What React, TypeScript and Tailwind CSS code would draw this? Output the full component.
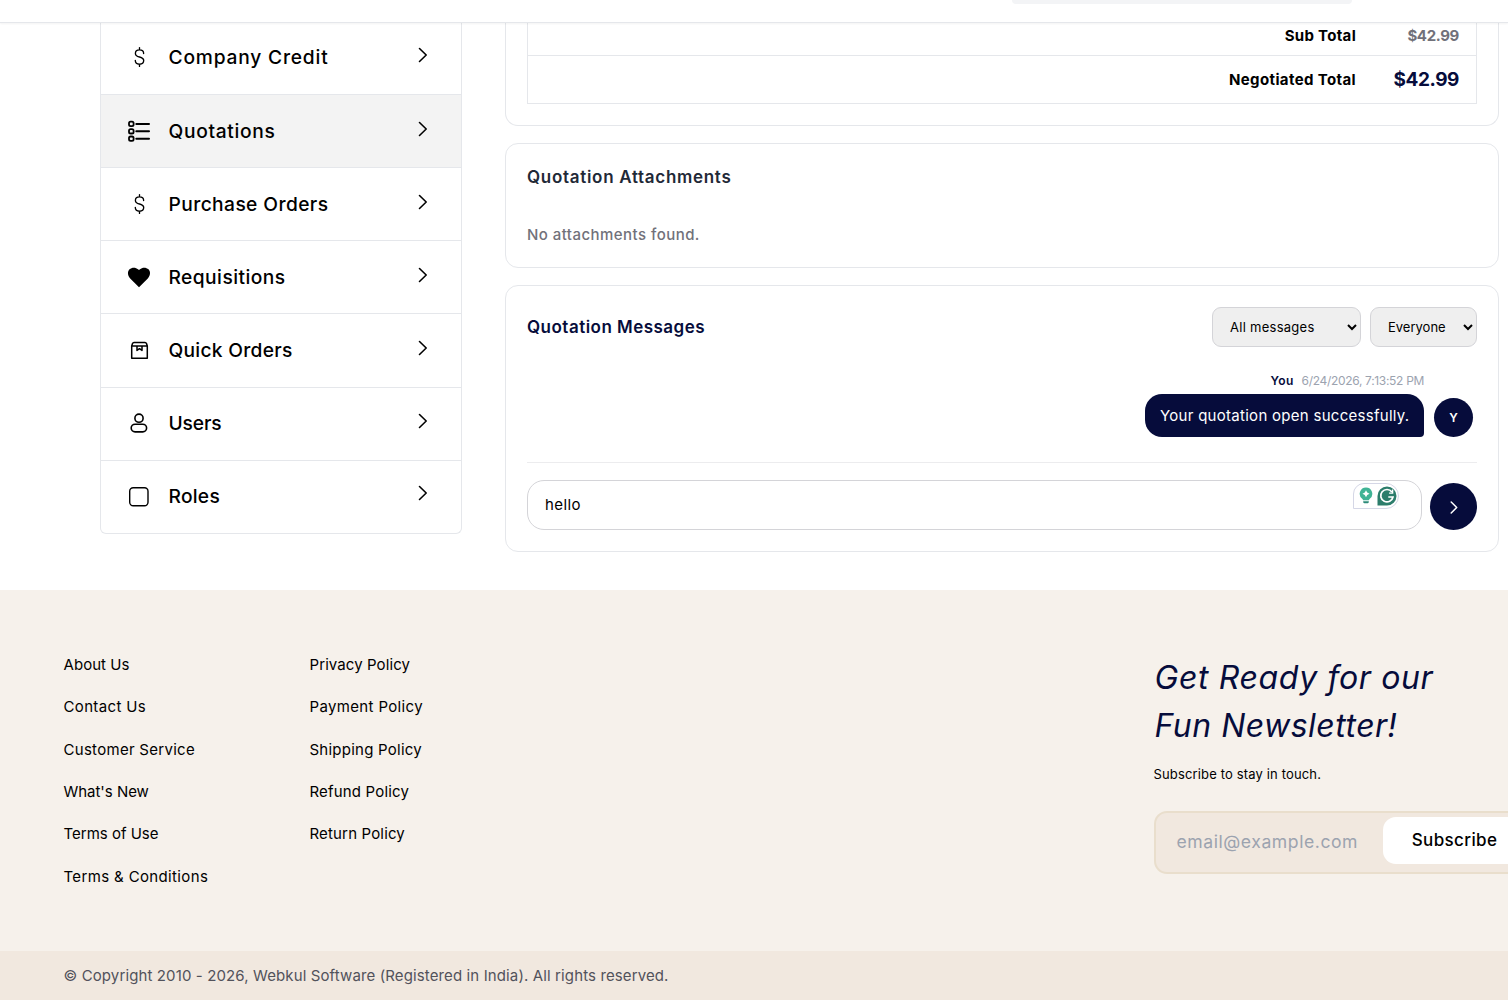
import type { ReactNode } from "react";

const DollarIcon = () => (
  <svg width="24" height="24" viewBox="0 0 24 24" fill="none" stroke="#000" strokeWidth="1.35" strokeLinecap="round">
    <path d="M12.500 2.600v2.200M12.500 19.200v2.200M16.600 8.600v-.3c0-2-1.700-3.400-4.100-3.400S8.400 6.400 8.400 8.400c0 2.100 1.500 2.900 4.100 3.600s4.200 1.500 4.200 3.600c0 2.100-1.700 3.600-4.200 3.600s-4.200-1.500-4.200-3.600v-.3" />
  </svg>
);

const ListIcon = () => (
  <svg width="24" height="24" viewBox="0 0 24 24" fill="none" stroke="#000" strokeWidth="2" strokeLinecap="round">
    <path d="M9.300 5H22M9.300 12.300H22M9.300 19.800H22" />
    <g strokeWidth="1.800">
      <rect x="2" y="2.700" width="4.600" height="4.400" rx="1.600" />
      <rect x="2" y="10.100" width="4.600" height="4.400" rx="1.600" />
      <rect x="2" y="17.500" width="4.600" height="4.400" rx="1.600" />
    </g>
  </svg>
);

const HeartIcon = () => (
  <svg width="24" height="24" viewBox="0 0 24 24" fill="#000">
    <path d="M12 22.200 3.200 13.400C.4 10.500.3 6.500 2.500 4.300c2.400-2.300 6.300-2.100 8.500-.1l1 .9 1-.9c2.200-2 6.100-2.200 8.500.1 2.200 2.200 2.100 6.200-.7 9.100Z" />
  </svg>
);

const BoxIcon = () => (
  <svg width="24" height="24" viewBox="0 0 24 24" fill="none" stroke="#000" strokeWidth="1.500" strokeLinejoin="round">
    <path d="M4.700 8v12.200h15.600V8M4.700 8l.8-2.400c.3-.8.700-1.200 1.500-1.200h11c.8 0 1.200.4 1.500 1.200l.8 2.400ZM10 8.200v4.200l2.500-1.700 2.500 1.700V8.200" />
  </svg>
);

const UserIcon = () => (
  <svg width="24" height="24" viewBox="0 0 24 24" fill="none" stroke="#000" strokeWidth="1.600">
    <circle cx="12" cy="7.200" r="4.100" />
    <rect x="4.200" y="13.200" width="15.400" height="7.700" rx="3.850" />
  </svg>
);

const SquareIcon = () => (
  <svg width="24" height="24" viewBox="0 0 24 24" fill="none" stroke="#000" strokeWidth="1.400">
    <rect x="2.700" y="3.700" width="18.300" height="18" rx="3.500" />
  </svg>
);

const menu: { label: string; icon: ReactNode; track: string; row: string }[] = [
  { label: "Company Credit", icon: <DollarIcon />, track: "tracking-[0.81px]", row: "h-[75px] -mt-[3px] border-b" },
  { label: "Quotations", icon: <ListIcon />, track: "tracking-[0.68px]", row: "h-[73.14px] border-b bg-[#f3f3f3]" },
  { label: "Purchase Orders", icon: <DollarIcon />, track: "tracking-[0.41px]", row: "h-[73.14px] border-b" },
  { label: "Requisitions", icon: <HeartIcon />, track: "tracking-[0.44px]", row: "h-[73.14px] border-b" },
  { label: "Quick Orders", icon: <BoxIcon />, track: "tracking-[0.28px]", row: "h-[73.14px] border-b" },
  { label: "Users", icon: <UserIcon />, track: "tracking-[-0.11px]", row: "h-[73.14px] border-b pb-[1px]" },
  { label: "Roles", icon: <SquareIcon />, track: "tracking-[0.26px]", row: "h-[72.5px] pb-[2px]" },
];

const companyLinks = [
  { label: "About Us", track: "tracking-[0.05px]" },
  { label: "Contact Us", track: "tracking-[0.35px]" },
  { label: "Customer Service", track: "tracking-[0.29px]" },
  { label: "What's New", track: "tracking-[-0.03px]" },
  { label: "Terms of Use", track: "tracking-[0px]" },
  { label: "Terms & Conditions", track: "tracking-[0.36px]" },
];

const policyLinks = [
  { label: "Privacy Policy", track: "tracking-[0.09px]" },
  { label: "Payment Policy", track: "tracking-[0.35px]" },
  { label: "Shipping Policy", track: "tracking-[0.24px]" },
  { label: "Refund Policy", track: "tracking-[0.17px]" },
  { label: "Return Policy", track: "tracking-[0.16px]" },
];

function Sidebar() {
  return (
    <nav className="w-[362px] shrink-0 self-start rounded-b-[6px] border-x border-b border-[#e5e7eb]">
      {menu.map((m) => (
        <a key={m.label} className={`flex items-center border-[#e5e7eb] pl-[26px] pr-[33px] ${m.row}`}>
          {m.icon}
          <span className={`ml-[17.5px] flex-1 whitespace-nowrap text-[19.2px] font-medium leading-7 ${m.track}`}>{m.label}</span>
          <svg className="-mt-[5px]" width="10" height="16" viewBox="0 0 10 16" fill="none" stroke="#000" strokeWidth="1.600" strokeLinecap="round" strokeLinejoin="round">
            <path d="M1.500 1.500 8.200 8 1.500 14.500" />
          </svg>
        </a>
      ))}
    </nav>
  );
}

function WritingAssistant() {
  return (
    <div className="absolute right-[22px] top-[2px] flex h-[26px] w-[46px] items-center gap-1 rounded-r-[13px] rounded-tl-[11px] border border-[#d5d7e6] bg-white pb-px pl-[5px]">
      <svg width="14" height="17" viewBox="0 0 14 17">
        <path d="M7 .5a6.300 6.300 0 0 0-3.800 11.300c.5.400.8.900.9 1.500h5.800c.1-.6.4-1.100.9-1.500A6.300 6.300 0 0 0 7 .5Z" fill="#3fb395" />
        <path d="M7 3.300 8.200 5.600 10.500 6.800 8.200 8 7 10.300 5.800 8 3.500 6.800 5.800 5.600Z" fill="#fff" />
        <path d="M4.200 14.300h5.600v.4c0 1-.8 1.600-1.800 1.600H6c-1 0-1.800-.6-1.800-1.600Z" fill="#2c8a78" />
      </svg>
      <svg width="20" height="20" viewBox="0 0 20 20">
        <path d="M10 .5a9.500 9.500 0 1 1 0 19H.5V10A9.500 9.500 0 0 1 10 .5Z" fill="#2c7d6b" />
        <path d="M14.900 6A6.200 6.200 0 1 0 16 11h-4.700" fill="none" stroke="#fff" strokeWidth="1.700" />
        <path d="M15.600 3.600v3.500h-3.500" fill="none" stroke="#fff" strokeWidth="1.400" />
      </svg>
    </div>
  );
}

function QuotationPanels() {
  return (
    <div className="ml-[43px] flex w-[994px] shrink-0 flex-col gap-[17px]">
      <section className="h-[103px] rounded-b-[13px] border-x border-b border-[#e5e7eb] px-[21px]">
        <div className="h-[81px] border-x border-b border-[#e5e7eb] font-bold">
          <div className="flex h-[33px] items-center justify-end border-b border-[#e5e7eb] pb-[7px] pr-[17px] text-[15px] leading-5">
            <span className="tracking-[0.3px]">Sub Total</span>
            <span className="w-[103px] text-right tracking-[-0.35px] text-[#71717a]">$42.99</span>
          </div>
          <div className="flex h-[48px] items-center justify-end pr-[17px] pt-px text-[15px]">
            <span className="tracking-[0.38px]">Negotiated Total</span>
            <span className="w-[103px] text-right text-[19px] tracking-[-0.42px] text-[#060c3b]">$42.99</span>
          </div>
        </div>
      </section>

      <section className="h-[125px] rounded-[13px] border border-[#e5e7eb] px-[21px] pt-[20px]">
        <h2 className="text-[17px] font-semibold leading-[26px] tracking-[0.7px] text-[#1f2937]">Quotation Attachments</h2>
        <p className="mt-[34px] text-[15px] font-medium leading-[22px] tracking-[0.45px] text-[#71717a]">No attachments found.</p>
      </section>

      <section className="h-[267px] rounded-[13px] border border-[#e5e7eb] px-[21px] pt-[21px]">
        <div className="flex h-10 items-center justify-between">
          <h2 className="pt-[2px] text-[17px] font-semibold tracking-[0.48px] text-[#060c3b]">Quotation Messages</h2>
          <div className="flex gap-[9px] text-[13px]">
            <select className="h-10 w-[149px] rounded-[9px] border border-[#d4d4d8] bg-[#efefef] px-[13px] tracking-[0.27px]">
              <option>All messages</option>
            </select>
            <select className="h-10 w-[107px] rounded-[9px] border border-[#d4d4d8] bg-[#efefef] px-[13px] tracking-[0px]">
              <option>Everyone</option>
            </select>
          </div>
        </div>

        <div className="flex items-end justify-end gap-[10px] border-b border-[#ececee] pb-[25px] pr-[4px] pt-[25px]">
          <div className="flex flex-col items-end">
            <div className="flex gap-[8px] text-[12px] leading-[17px]">
              <span className="font-semibold tracking-[0.32px] text-[#060c3b]">You</span>
              <span className="tracking-[-0.32px] text-[#9ca3af]">6/24/2026, 7:13:52 PM</span>
            </div>
            <p className="mt-[5px] h-[43px] w-[279px] whitespace-nowrap rounded-[17px] rounded-br-[4px] bg-[#060c3b] pl-[15px] text-[15px] leading-[43px] tracking-[0.28px] text-white">
              Your quotation open successfully.
            </p>
          </div>
          <span className="flex size-[39px] items-center justify-center rounded-full bg-[#060c3b] text-[12px] font-semibold text-white">Y</span>
        </div>

        <div className="mt-[17px] flex items-end gap-[8px]">
          <div className="relative h-[50px] w-[895px] rounded-[17px] border border-[#d4d4d8] pl-[17px] text-[15px] leading-[48px] tracking-[0.43px]">
            hello
            <WritingAssistant />
          </div>
          <button className="flex size-[47px] items-center justify-center rounded-full bg-[#060c3b]">
            <svg width="8" height="14" viewBox="0 0 8 14" fill="none" stroke="#fff" strokeWidth="1.500" strokeLinecap="round" strokeLinejoin="round">
              <path d="M1.200 2 6.700 7.500 1.200 13" />
            </svg>
          </button>
        </div>
      </section>
    </div>
  );
}

function LinkColumn({ links, width }: { links: { label: string; track: string }[]; width: string }) {
  return (
    <ul className={`flex shrink-0 flex-col gap-[20.35px] text-[15px] leading-[22px] ${width}`}>
      {links.map((l) => (
        <li key={l.label} className={l.track}>{l.label}</li>
      ))}
    </ul>
  );
}

function Footer() {
  return (
    <footer className="bg-[#f6f1eb]">
      <div className="flex h-[361px] pl-[63.500px] pt-[64px]">
        <LinkColumn links={companyLinks} width="w-[246px]" />
        <LinkColumn links={policyLinks} width="w-[844px]" />
        <div className="w-[420px] shrink-0">
          <p className="pl-[1px] text-[32px] italic leading-[48px] text-[#060c3b]">
            <span className="tracking-[0.62px]">Get Ready for our</span>
            <br />
            <span className="tracking-[0.49px]">Fun Newsletter!</span>
          </p>
          <p className="mt-[14px] text-[13px] leading-5 tracking-[0.15px]">Subscribe to stay in touch.</p>
          <div className="mt-[27px] flex h-[63px] items-start rounded-[13px] border-2 border-[#e9decc] bg-[#f1e8df] pt-1">
            <span className="w-[227px] pl-[21px] text-[17.6px] leading-[50px] tracking-[0.55px] text-[#9ca3af]">email@example.com</span>
            <button className="h-[47px] w-[144px] rounded-[13px] bg-white text-[17px] font-medium tracking-[0.36px]">Subscribe</button>
          </div>
        </div>
      </div>
      <div className="h-[49px] bg-[#f1e8df] pl-[63.500px] text-[15px] leading-[49px] tracking-[0.12px] text-[#52525b]">
        © Copyright 2010 - 2026, Webkul Software (Registered in India). All rights reserved.
      </div>
    </footer>
  );
}

export default function App() {
  return (
    <div className="h-[1000px] w-full overflow-hidden bg-white font-['Inter',sans-serif] text-black">
      <header className="relative z-10 h-[23px] border-b border-[#e5e7eb] bg-white pl-[1012px] shadow-[0_1px_2px_rgba(0,0,0,0.05)]">
        <div className="h-1 w-[340px] rounded-b-[8px] bg-[#f3f4f6]" />
      </header>
      <main className="flex h-[567px] overflow-hidden pl-[100px]">
        <Sidebar />
        <QuotationPanels />
      </main>
      <Footer />
    </div>
  );
}
